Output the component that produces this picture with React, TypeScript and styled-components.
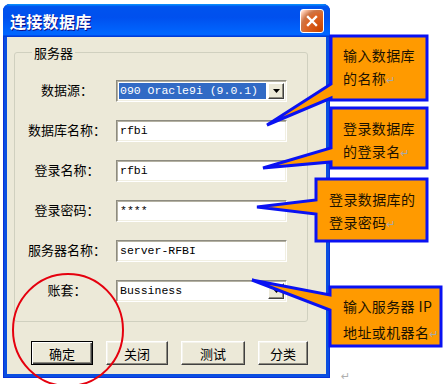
import React from 'react';
import styled, { createGlobalStyle } from 'styled-components';

const GlobalStyle = createGlobalStyle`
  html, body {
    margin: 0;
    padding: 0;
    background: #ffffff;
  }
  body {
    font-family: "Noto Sans CJK SC", "Noto Sans", sans-serif;
  }
`;

const CJK = `"Noto Sans CJK SC", "Noto Sans", sans-serif`;
const MONO = `"Liberation Mono", "DejaVu Sans Mono", monospace`;

const Page = styled.div`
  position: relative;
  width: 443px;
  height: 384px;
  overflow: hidden;
  background: #ffffff;
  padding: 4px 0 0 3px;
  box-sizing: border-box;
`;

const Window = styled.div`
  width: 327px;
  height: 374px;
  display: flex;
  flex-direction: column;
  background: #0a4ee0;
  border-radius: 7px 7px 0 0;
  box-shadow: inset 0 0 0 1px #0831d9;
  overflow: hidden;
`;

const TitleBar = styled.div`
  height: 33px;
  flex: none;
  display: flex;
  align-items: center;
  justify-content: space-between;
  padding: 0 6px 0 7px;
  background: linear-gradient(
    180deg,
    #0997ff,
    #0053ee 8%,
    #0050ee 40%,
    #0066ff 88%,
    #0066ff 93%,
    #005bff 95%,
    #003dd7 96%,
    #003dd7
  );
`;

const Title = styled.span`
  color: #ffffff;
  font-family: ${CJK};
  font-size: 16px;
  font-weight: 700;
  letter-spacing: 0.3px;
  text-shadow: 1px 1px #0f1089;
`;

const CloseButton = styled.div`
  width: 22px;
  height: 22px;
  border: 1px solid #ffffff;
  border-radius: 3px;
  display: flex;
  align-items: center;
  justify-content: center;
  background: radial-gradient(
    circle at 90% 90%,
    #cc4600 0,
    #dc6527 55%,
    #cd7546 70%,
    #ffccb2 90%,
    #ffffff 100%
  );
`;

const Body = styled.div`
  flex: 1;
  margin: 0 4px 4px 4px;
  background: #ece9d8;
  padding: 8px 18px 9px 7px;
  display: flex;
  flex-direction: column;
`;

const GroupBox = styled.fieldset`
  margin: 0;
  padding: 20px 0 19px 12px;
  border: 1px solid #d0d0bf;
  border-radius: 3px;
`;

const GroupTitle = styled.legend`
  font-family: ${CJK};
  font-size: 13px;
  line-height: 15px;
  color: #000;
  padding: 0 2px;
  margin-left: 5px;
`;

const FormGrid = styled.div`
  display: grid;
  grid-template-columns: 80px 171px;
  grid-auto-rows: 22px;
  column-gap: 9px;
  row-gap: 18px;
`;

const FieldLabel = styled.div`
  font-family: ${CJK};
  font-size: 13px;
  line-height: 15px;
  text-align: center;
  padding-top: 2px;
  color: #000;
  white-space: nowrap;
`;

const Sunken = styled.div`
  box-sizing: border-box;
  height: 22px;
  background: #ffffff;
  border-style: solid;
  border-width: 1px;
  border-color: #8d8b80 #ffffff #ffffff #8d8b80;
  box-shadow: inset 1px 1px #b4b1a2, inset -1px -1px #f1efe2;
  display: flex;
  align-items: center;
  padding: 0 2px 0 2px;
  font-family: ${MONO};
  font-size: 11.5px;
  color: #000;
  white-space: nowrap;
  overflow: hidden;
`;

const ComboText = styled.span<{ $selected?: boolean }>`
  flex: 1;
  height: 16px;
  line-height: 16px;
  padding-left: 1px;
  margin-right: 2px;
  background: ${(p) => (p.$selected ? '#316ac5' : 'transparent')};
  color: ${(p) => (p.$selected ? '#ffffff' : '#000000')};
`;

const DropButton = styled.span`
  width: 16px;
  height: 16px;
  box-sizing: border-box;
  flex: none;
  background: #ece9d8;
  border-style: solid;
  border-width: 1px;
  border-color: #ffffff #404040 #404040 #ffffff;
  box-shadow: inset -1px -1px #8d8b80;
  display: flex;
  align-items: center;
  justify-content: center;
`;

const ButtonRow = styled.div`
  display: flex;
  gap: 13px;
  margin: 19px 0 0 17px;
`;

const Button = styled.div<{ $width: number; $default?: boolean }>`
  width: ${(p) => p.$width}px;
  height: 24px;
  box-sizing: border-box;
  display: flex;
  align-items: center;
  justify-content: center;
  background: #ece9d8;
  font-family: ${CJK};
  font-size: 13px;
  color: #000;
  border-style: solid;
  border-width: 1px;
  border-color: ${(p) => (p.$default ? '#000000' : '#ffffff #404040 #404040 #ffffff')};
  box-shadow: ${(p) =>
    p.$default
      ? 'inset 1px 1px #ffffff, inset -1px -1px #404040, inset -2px -2px #8d8b80'
      : 'inset -1px -1px #8d8b80, inset 1px 1px #f4f3ec'};
`;

const Overlay = styled.svg`
  position: absolute;
  left: 0;
  top: 0;
  pointer-events: none;
`;

const CalloutText = styled.div<{ $left: number; $top: number; $lineHeight: number }>`
  position: absolute;
  left: ${(p) => p.$left}px;
  top: ${(p) => p.$top}px;
  font-family: ${CJK};
  font-size: 14px;
  line-height: ${(p) => p.$lineHeight}px;
  color: #1c1200;
  letter-spacing: 0.4px;
  white-space: nowrap;
`;

const ReturnMark = styled.span`
  color: #a9a9a9;
  font-family: "DejaVu Sans", sans-serif;
  font-size: 11px;
`;

const StrayMark = styled.span`
  position: absolute;
  left: 341px;
  top: 370px;
  color: #b0b0b0;
  font-family: "DejaVu Sans", sans-serif;
  font-size: 11px;
`;

type CalloutShape = {
  x: number;
  y: number;
  w: number;
  h: number;
  b1: number;
  b2: number;
  tx: number;
  ty: number;
};

const shapes: CalloutShape[] = [
  { x: 331, y: 36, w: 96, h: 64, b1: 84, b2: 98, tx: 267, ty: 125 },
  { x: 331, y: 108, w: 96, h: 60, b1: 148, b2: 162, tx: 263, ty: 168 },
  { x: 316, y: 179, w: 111, h: 62, b1: 200, b2: 214, tx: 257, ty: 207 },
  { x: 330, y: 287, w: 111, h: 59, b1: 295, b2: 310, tx: 252, ty: 280 },
];

const calloutPath = (s: CalloutShape) =>
  `M${s.x},${s.y} H${s.x + s.w} V${s.y + s.h} H${s.x} V${s.b2} L${s.tx},${s.ty} L${s.x},${s.b1} Z`;

const fields = [
  { label: '数据源：', value: '090 Oracle9i (9.0.1)', combo: true, selected: true },
  { label: '数据库名称：', value: 'rfbi' },
  { label: '登录名称：', value: 'rfbi' },
  { label: '登录密码：', value: '****' },
  { label: '服务器名称：', value: 'server-RFBI' },
  { label: '账套：', value: 'Bussiness', combo: true },
];

const Arrow = () => (
  <svg width="7" height="4" viewBox="0 0 7 4">
    <path d="M0 0 H7 L3.5 4 Z" fill="#000" />
  </svg>
);

export default function App() {
  return (
    <Page>
      <GlobalStyle />
      <Window>
        <TitleBar>
          <Title>连接数据库</Title>
          <CloseButton>
            <svg width="12" height="12" viewBox="0 0 12 12">
              <path d="M2 2 L10 10 M10 2 L2 10" stroke="#fff" strokeWidth="2.4" strokeLinecap="square" />
            </svg>
          </CloseButton>
        </TitleBar>
        <Body>
          <GroupBox>
            <GroupTitle>服务器</GroupTitle>
            <FormGrid>
              {fields.map((f) => (
                <React.Fragment key={f.label}>
                  <FieldLabel>{f.label}</FieldLabel>
                  <Sunken>
                    {f.combo ? (
                      <>
                        <ComboText $selected={f.selected}>{f.value}</ComboText>
                        <DropButton>
                          <Arrow />
                        </DropButton>
                      </>
                    ) : (
                      <ComboText>{f.value}</ComboText>
                    )}
                  </Sunken>
                </React.Fragment>
              ))}
            </FormGrid>
          </GroupBox>
          <ButtonRow>
            <Button $width={62} $default>确定</Button>
            <Button $width={62}>关闭</Button>
            <Button $width={64}>测试</Button>
            <Button $width={50}>分类</Button>
          </ButtonRow>
        </Body>
      </Window>

      <Overlay width="443" height="384" viewBox="0 0 443 384">
        {shapes.map((s, i) => (
          <path key={i} d={calloutPath(s)} fill="#ff9a00" stroke="#0a12f2" strokeWidth="3" strokeLinejoin="miter" />
        ))}
        <ellipse cx="68" cy="330" rx="55" ry="56" fill="none" stroke="#e5000e" strokeWidth="2" />
      </Overlay>

      <CalloutText $left={343} $top={44} $lineHeight={23}>
        输入数据库<br />的名称<ReturnMark>↵</ReturnMark>
      </CalloutText>
      <CalloutText $left={343} $top={117} $lineHeight={23}>
        登录数据库<br />的登录名<ReturnMark>↵</ReturnMark>
      </CalloutText>
      <CalloutText $left={329} $top={188} $lineHeight={23}>
        登录数据库的<br />登录密码<ReturnMark>↵</ReturnMark>
      </CalloutText>
      <CalloutText $left={343} $top={293} $lineHeight={26}>
        输入服务器 IP<br />地址或机器名<ReturnMark>↵</ReturnMark>
      </CalloutText>
      <StrayMark>↵</StrayMark>
    </Page>
  );
}
